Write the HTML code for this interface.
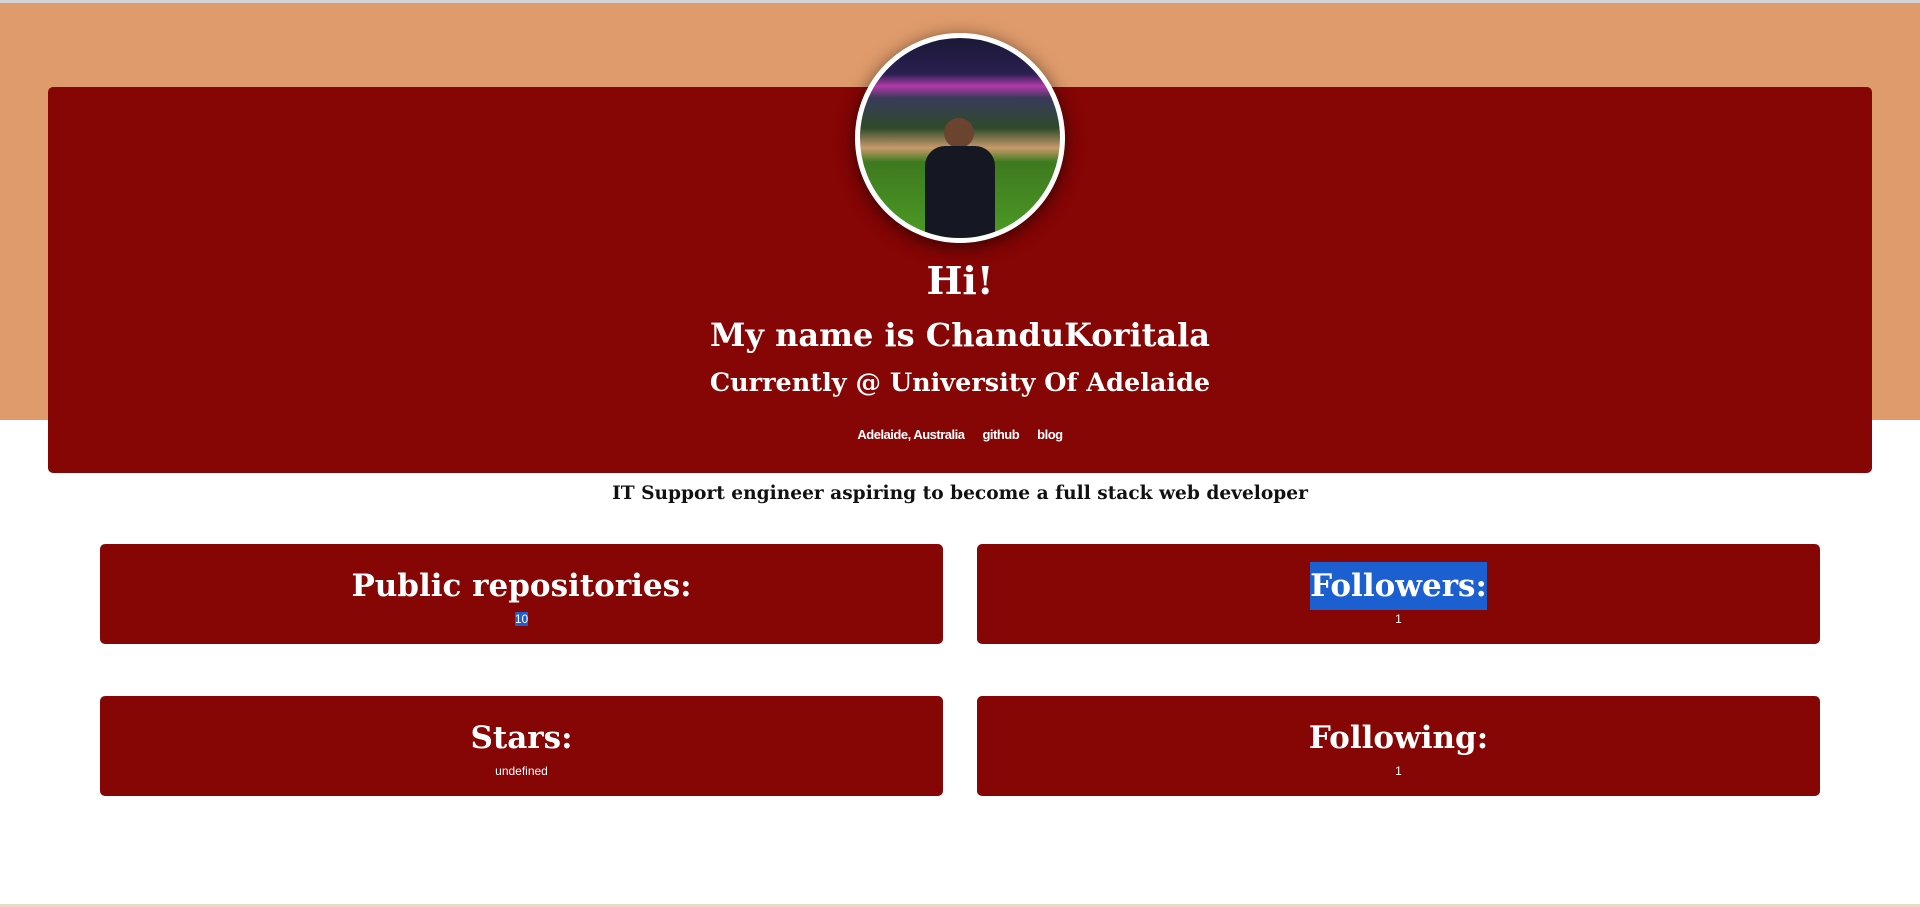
<!DOCTYPE html>
<html><head><meta charset="utf-8"><style>
html,body{margin:0;padding:0;width:1920px;height:907px;overflow:hidden;background:#fff;font-family:"DejaVu Serif",serif;}
.top{position:absolute;left:0;top:0;width:1920px;height:3px;background:#d4d4d4}
.band{position:absolute;left:0;top:3px;width:1920px;height:417px;background:#df9b6b}
.hero{position:absolute;left:48px;top:87px;width:1824px;height:386px;background:#860505;border-radius:5px;color:#fff;text-align:center}
.av{position:absolute;left:855px;top:33px;width:200px;height:200px;border-radius:50%;border:5px solid #fff;box-shadow:0 4px 18px rgba(0,0,0,.6);overflow:hidden;background:linear-gradient(#1a1838 0%,#2a2050 18%,#b23aa8 24%,#3a3a5a 30%,#2e4a2a 45%,#c89a6a 55%,#3e7a20 62%,#4d9a24 100%)}
.t{position:absolute;left:0;width:1920px;text-align:center;color:#fff;font-weight:bold;white-space:nowrap}
.links{font-family:"Liberation Sans",sans-serif;font-size:13px;letter-spacing:-0.5px}
.links span{margin:0 9px}
.tag{position:absolute;left:0;top:483px;width:1920px;text-align:center;font-size:18.6px;font-weight:bold;color:#111}
.card{position:absolute;width:843px;height:100px;background:#860505;border-radius:5px;color:#fff;text-align:center}
.card h2{margin:0;position:absolute;left:0;right:0;top:22px;font-size:31px;line-height:40px}
.card p{margin:0;position:absolute;left:0;right:0;top:68px;font-family:"Liberation Sans",sans-serif;font-size:12px;line-height:14px}
.hl{background:#1c5fd1}
</style></head><body>
<div class="top"></div>
<div class="band"></div>
<div class="hero"></div>
<div class="av">
<div style="position:absolute;left:84px;top:80px;width:30px;height:30px;border-radius:50%;background:#6b4430"></div>
<div style="position:absolute;left:65px;top:108px;width:70px;height:100px;border-radius:20px 20px 0 0;background:#151822"></div>
</div>
<div class="t" style="top:258px;font-size:38px">Hi!</div>
<div class="t" style="top:316px;font-size:32px">My name is ChanduKoritala</div>
<div class="t" style="top:368px;font-size:25.5px">Currently @ University Of Adelaide</div>
<div class="t links" style="top:427px"><span>Adelaide, Australia</span><span>github</span><span>blog</span></div>
<div class="tag">IT Support engineer aspiring to become a full stack web developer</div>
<div class="card" style="left:100px;top:544px"><h2>Public repositories:</h2><p><span class="hl">10</span></p></div>
<div class="card" style="left:977px;top:544px"><h2><span class="hl" style="padding:6px 0">Followers:</span></h2><p>1</p></div>
<div class="card" style="left:100px;top:696px"><h2>Stars:</h2><p>undefined</p></div>
<div class="card" style="left:977px;top:696px"><h2>Following:</h2><p>1</p></div>
<div style="position:absolute;left:0;top:904px;width:1920px;height:3px;background:#e8dcc8"></div>
</body></html>
